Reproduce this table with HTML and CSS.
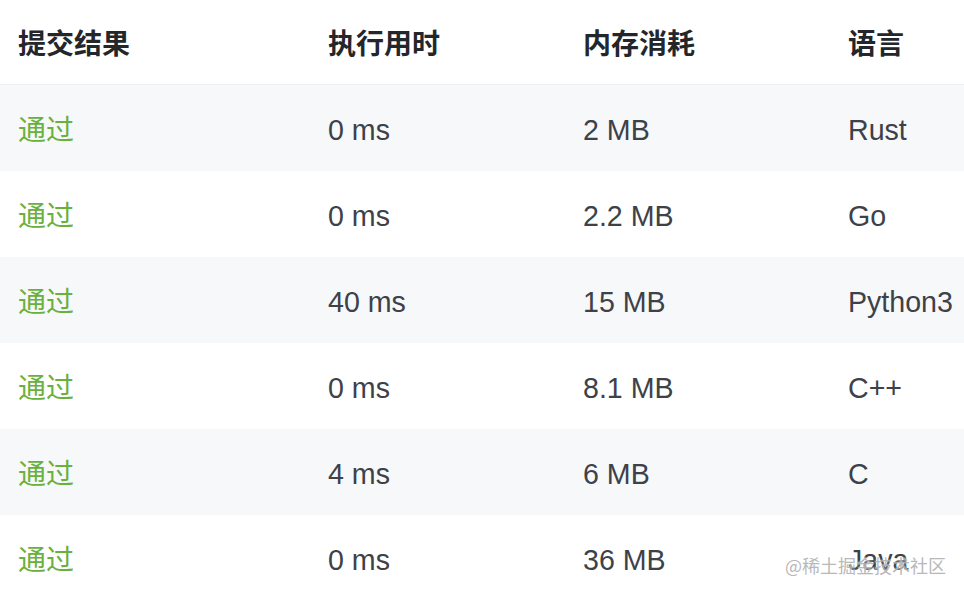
FILE: index.html
```html
<!DOCTYPE html>
<html lang="zh">
<head>
<meta charset="utf-8">
<link rel="stylesheet" href="styles.css">
</head>
<body>
<div class="page">
  <div class="table">
    <div class="row head">
      <div class="cell">提交结果</div>
      <div class="cell">执行用时</div>
      <div class="cell">内存消耗</div>
      <div class="cell">语言</div>
    </div>
    <div class="row striped">
      <div class="cell pass">通过</div>
      <div class="cell">0 ms</div>
      <div class="cell">2 MB</div>
      <div class="cell">Rust</div>
    </div>
    <div class="row">
      <div class="cell pass">通过</div>
      <div class="cell">0 ms</div>
      <div class="cell">2.2 MB</div>
      <div class="cell">Go</div>
    </div>
    <div class="row striped">
      <div class="cell pass">通过</div>
      <div class="cell">40 ms</div>
      <div class="cell">15 MB</div>
      <div class="cell">Python3</div>
    </div>
    <div class="row">
      <div class="cell pass">通过</div>
      <div class="cell">0 ms</div>
      <div class="cell">8.1 MB</div>
      <div class="cell">C++</div>
    </div>
    <div class="row striped">
      <div class="cell pass">通过</div>
      <div class="cell">4 ms</div>
      <div class="cell">6 MB</div>
      <div class="cell">C</div>
    </div>
    <div class="row">
      <div class="cell pass">通过</div>
      <div class="cell">0 ms</div>
      <div class="cell">36 MB</div>
      <div class="cell">Java</div>
    </div>
  </div>
  <div class="watermark">@稀土掘金技术社区</div>
</div>
</body>
</html>
```
FILE: styles.css
```css
html, body {
  margin: 0;
  padding: 0;
  background: #ffffff;
}
body {
  width: 964px;
  height: 596px;
  overflow: hidden;
  font-family: "Liberation Sans", "Noto Sans CJK SC", sans-serif;
}
.page {
  position: relative;
  width: 964px;
  height: 596px;
  overflow: hidden;
}
.table {
  display: flex;
  flex-direction: column;
}
.row {
  display: grid;
  grid-template-columns: 310px 255px 265px 1fr;
  padding-left: 18px;
  height: 86px;
  align-items: center;
  font-size: 28.6px;
  color: #3d4148;
  white-space: nowrap;
}
.cell {
  padding-top: 4px;
}
.row.head {
  height: 84px;
  border-bottom: 1px solid #eceef0;
  font-size: 28px;
  font-weight: 600;
  color: #23262b;
  font-family: "Noto Sans CJK SC", sans-serif;
}
.row.head .cell,
.cell.pass {
  padding-top: 0;
}
.row.striped {
  background: #f7f8fa;
}
.cell.pass {
  font-size: 28px;
  color: #69b03c;
  font-family: "Noto Sans CJK SC", sans-serif;
}
.watermark {
  position: absolute;
  left: 785px;
  top: 552px;
  font-size: 18px;
  line-height: 26px;
  font-family: "Noto Sans CJK SC", sans-serif;
  color: rgba(165, 165, 165, 0.8);
  text-shadow: 0 0 2px #ffffff;
  white-space: nowrap;
}
```
